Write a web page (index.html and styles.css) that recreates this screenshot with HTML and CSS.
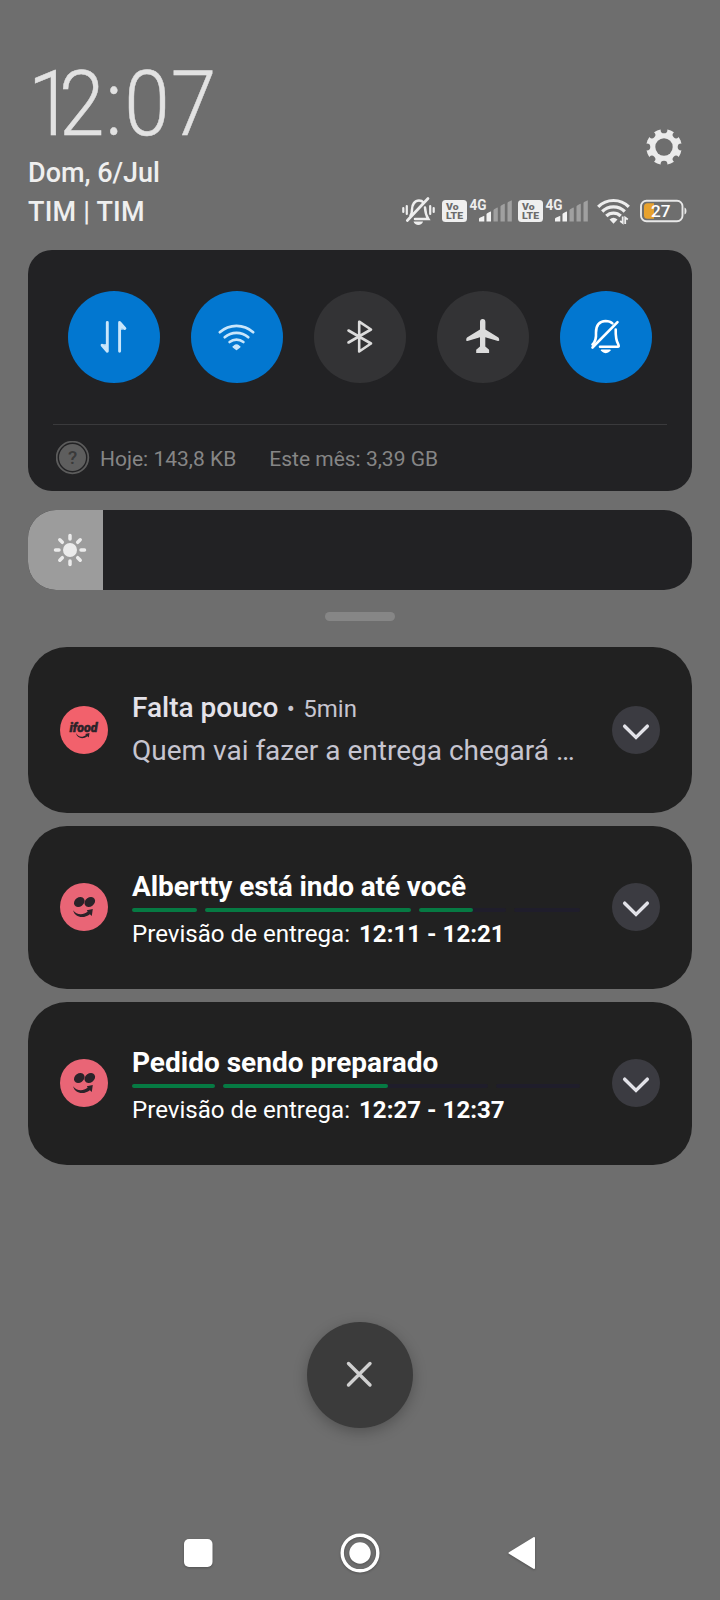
FILE: index.html
```html
<!DOCTYPE html>
<html lang="pt-BR">
<head>
<meta charset="utf-8">
<title>Central de notificações</title>
<link rel="stylesheet" href="styles.css">
</head>
<body>
<svg class="defs" width="0" height="0" aria-hidden="true">
  <defs>
    <symbol id="chevron" viewBox="0 0 48 48">
      <path d="M12.700 20.200 24 31.400l11.300-11.200" fill="none" stroke="#e2e2e8" stroke-width="3.500" stroke-linecap="round" stroke-linejoin="miter"/>
    </symbol>
    <symbol id="face" viewBox="0 0 48 48">
      <g fill="#2b2329">
        <ellipse cx="19.300" cy="19" rx="5.700" ry="4.500" transform="rotate(-35 19.300 19)"/>
        <ellipse cx="29.800" cy="19" rx="5.700" ry="4.500" transform="rotate(-35 29.800 19)"/>
        <path d="M13.200 27.200C16 31.500 22.500 33 27.700 28.600L26.800 27.300 32.800 26 31.800 33 29.900 31.200C23.500 36.200 14.500 34.300 13.200 27.200z"/>
      </g>
    </symbol>
    <symbol id="signal" viewBox="0 0 46 39">
      <text x="0.500" y="16.500" font-size="14" font-weight="700" fill="#eee" textLength="17" lengthAdjust="spacingAndGlyphs">4G</text>
      <path fill="#f2f2f2" d="M10 28.500v-2.500q0-.8.800-1.200l4-1.900q.5-.2.500.4v5.200zM17.500 28.500V21.300q0-.7.700-1.100l3.200-1.600q.6-.2.600.4v9.500z"/>
      <path fill="#a0a0a0" d="M24.500 28.500V17.300q0-.7.700-1.100l3-1.600q.6-.2.600.4v13.500zM31.500 28.500V13.500q0-.7.700-1.100l3-1.600q.6-.2.600.4v17.300zM38.500 28.500V10.100q0-.7.700-1.100l3-1.600q.6-.2.600.4v20.700z"/>
    </symbol>
    <symbol id="volte" viewBox="0 0 25 39">
      <rect x="0" y="7" width="25" height="22" rx="3.500" fill="#efefef"/>
      <text x="4" y="17.200" font-size="9.500" font-weight="900" fill="#6b6b6b" textLength="12.500" lengthAdjust="spacingAndGlyphs">Vo</text>
      <text x="4" y="26.200" font-size="9.500" font-weight="900" fill="#6b6b6b" textLength="17" lengthAdjust="spacingAndGlyphs">LTE</text>
    </symbol>
  </defs>
</svg>
<main class="shade">
  <header class="top">
    <div>
      <div class="clock"><span class="d1">1</span><span class="d2">2</span><span class="colon">:</span><span class="d3">0</span><span>7</span></div>
      <div class="line">Dom, 6/Jul</div>
    </div>
    <svg class="gear" viewBox="0 0 36 36">
      <mask id="cog">
        <circle cx="18" cy="18" r="17.800" fill="#fff"/>
        <circle cx="18" cy="18" r="8.700" fill="#000"/>
        <g fill="#000">
          <circle cx="18" cy="0.900" r="3.400"/>
          <circle cx="18" cy="0.900" r="3.400" transform="rotate(45 18 18)"/>
          <circle cx="18" cy="0.900" r="3.400" transform="rotate(90 18 18)"/>
          <circle cx="18" cy="0.900" r="3.400" transform="rotate(135 18 18)"/>
          <circle cx="18" cy="0.900" r="3.400" transform="rotate(180 18 18)"/>
          <circle cx="18" cy="0.900" r="3.400" transform="rotate(225 18 18)"/>
          <circle cx="18" cy="0.900" r="3.400" transform="rotate(270 18 18)"/>
          <circle cx="18" cy="0.900" r="3.400" transform="rotate(315 18 18)"/>
        </g>
      </mask>
      <rect width="36" height="36" fill="#ebebeb" mask="url(#cog)"/>
    </svg>
  </header>
  <div class="status">
    <div class="line carrier">TIM | TIM</div>
    <div class="icons">
      <svg width="33" height="39" viewBox="0 0 33 39">
        <g fill="none" stroke="#eee" stroke-width="2.200" stroke-linecap="round">
          <path d="M8.500 22.500c1.200-1.500 1.500-3 1.500-6 0-5 2.800-9 7-9 2 0 3.500.8 4.500 2M23 14.500c.3 5 .7 7.500 3.300 11.500H13" stroke-width="2.500"/>
          <path d="M5.300 27.500 26 5.500" stroke-width="2.700"/>
          <path d="M1.300 15v4M4.800 13v8M28.200 13v8M31.700 15v4"/>
        </g>
        <path d="M11.500 28.500h9.500c-.8 4.500-8.500 4.500-9.500 0z" fill="#eee"/>
      </svg>
      <svg class="volte" width="25" height="39"><use href="#volte"/></svg>
      <svg class="signal" width="46" height="39"><use href="#signal"/></svg>
      <svg class="volte2" width="25" height="39"><use href="#volte"/></svg>
      <svg class="signal" width="46" height="39"><use href="#signal"/></svg>
      <svg class="wifi" width="34" height="39" viewBox="0 0 34 39">
        <g fill="none" stroke="#eee" stroke-width="3.200">
          <path d="M1.200 13.900A21.500 21.500 0 0 1 31.800 13.900"/>
          <path d="M5.200 18.500A16 16 0 0 1 27.800 18.500"/>
          <path d="M9.300 23A10.300 10.300 0 0 1 23.700 23"/>
        </g>
        <path d="M12.500 26.500q4-3.600 8 0l-4 4.300z" fill="#eee"/>
        <path d="M25.700 23.500v6.500l-2.500-2M28.200 31v-6.500l2.600 2" fill="none" stroke="#eee" stroke-width="1.800"/>
      </svg>
      <svg class="battery" width="47" height="39" viewBox="0 0 47 39">
        <rect x="1" y="7.800" width="41.500" height="20.400" rx="5.500" fill="none" stroke="#e8e8e8" stroke-width="1.900"/>
        <path d="M7.500 10.300H14v15.400H7.500a3.500 3.500 0 0 1-3.500-3.500v-8.400a3.500 3.500 0 0 1 3.500-3.500z" fill="#e8a22e"/>
        <path d="M44.500 14.500c2.600.8 2.600 6.200 0 7z" fill="#e8e8e8"/>
        <text x="11" y="24" font-size="17" font-weight="500" fill="#fff" textLength="19.500" lengthAdjust="spacingAndGlyphs">27</text>
      </svg>
    </div>
  </div>

  <section class="panel">
    <div class="toggles">
      <div class="toggle on">
        <svg viewBox="0 0 92 92" fill="none" stroke="#c9e6fb" stroke-width="2.900" stroke-linecap="round" stroke-linejoin="round">
          <path d="M39.300 31.500v28.700l-5.200-6M51.600 60.200V31.500l5.300 6"/>
          <path d="M39.300 54v6.200l-5.200-6zM51.600 38v-6.500l5.300 6z" fill="#c9e6fb" stroke-width="1"/>
        </svg>
      </div>
      <div class="toggle on">
        <svg viewBox="0 0 92 92" fill="none" stroke="#c9e6fb" stroke-width="2.700" stroke-linecap="round">
          <path d="M28.800 41.200A25 25 0 0 1 62.200 41.200"/>
          <path d="M33.700 46.200A18 18 0 0 1 57.300 46.200"/>
          <path d="M38.600 51A11.500 11.500 0 0 1 52.400 51"/>
          <path d="M43.200 55q2.300-2 4.600 0l1 .8-3.300 2.600-3.300-2.600z" fill="#c9e6fb" stroke-width="1.500" stroke-linejoin="round"/>
        </svg>
      </div>
      <div class="toggle">
        <svg viewBox="0 0 92 92" fill="none" stroke="#dcdcdc" stroke-width="2.600" stroke-linecap="round" stroke-linejoin="round">
          <path d="M34.500 39.500 57 52.500 45.200 60.500V30.700L57 38.500 34.500 51.500"/>
        </svg>
      </div>
      <div class="toggle">
        <svg viewBox="0 0 92 92" fill="#dcdcdc">
          <path d="M43 31q0-3 2.700-3t2.700 3v7.500l13 8q1 .8.800 3.300l-1.300.3L48.300 46.200V55.500l3.800 3.200v3.300H39.200v-3.300L43 55.500V46.200L30.500 50.100l-1.300-.3q-.2-2.500.8-3.300l13-8z"/>
        </svg>
      </div>
      <div class="toggle on">
        <svg viewBox="0 0 92 92" fill="none" stroke="#fff" stroke-width="2.600" stroke-linecap="round" stroke-linejoin="round">
          <path d="M32.500 53.500q4-3.500 3.500-12 0-11 9.700-11.500 4.300 0 6.700 2.400M55.700 38.500c-.2 7 .3 11 2.700 15.200.6 1.500.4 2-.7 2H40"/>
          <path d="M32.500 56.500 57.500 31.200" />
          <path d="M41.500 59.200h8.500q-4.300 4.400-8.500 0z" fill="#fff" stroke-width="1.500"/>
        </svg>
      </div>
    </div>
    <div class="usage">
      <svg width="34" height="34" viewBox="0 0 34 34">
        <circle cx="16.500" cy="16.500" r="15.800" fill="none" stroke="#5c5c5c" stroke-width="1.800"/>
        <circle cx="16.500" cy="16.500" r="13.500" fill="#5e5e5e"/>
        <text x="16.500" y="23.200" font-size="19" font-weight="500" fill="#3a3a3a" text-anchor="middle">?</text>
      </svg>
      <span class="today">Hoje: 143,8 KB</span>
      <span class="month">Este mês: 3,39 GB</span>
    </div>
  </section>

  <div class="brightness">
    <div class="level">
      <svg width="34" height="34" viewBox="-17 -17 34 34">
        <circle r="7" fill="#ebebeb"/>
        <path d="M0-11V-14.500M0 11V14.500M-11 0H-14.500M11 0H14.500M-7.700-7.700-10.200-10.200M7.700-7.700 10.200-10.200M-7.700 7.700-10.200 10.200M7.700 7.700 10.200 10.200" stroke="#ebebeb" stroke-width="3.500" stroke-linecap="round"/>
      </svg>
    </div>
  </div>
  <div class="handle"></div>

  <section class="cards">
    <article class="card first">
      <svg class="app bright" viewBox="0 0 48 48">
        <text x="9.500" y="25.500" font-size="12.500" font-weight="900" font-style="italic" fill="#2b2329" textLength="28" lengthAdjust="spacingAndGlyphs" stroke="#2b2329" stroke-width=".5">ifood</text>
        <path d="M16 27c2 4 6.500 4.800 10 1.900l-.8-1 4.300-.9-.7 4.400-1.300-1.100c-4.500 3.300-10.700 2.200-11.500-3.300z" fill="#2b2329"/>
      </svg>
      <div class="body">
        <div class="head"><span class="title">Falta pouco</span><span class="dot">•</span><span class="time">5min</span></div>
        <div class="message">Quem vai fazer a entrega chegará …</div>
      </div>
      <svg class="expand"><use href="#chevron"/></svg>
    </article>
    <article class="card">
      <svg class="app"><use href="#face"/></svg>
      <div class="body order">
        <div class="heading tight">Albertty está indo até você</div>
        <div class="steps">
          <i class="step done" style="flex-grow:65"></i>
          <i class="step done" style="flex-grow:206"></i>
          <i class="step" style="flex-grow:87"><b class="fill" style="width:62%"></b></i>
          <i class="step" style="flex-grow:66"></i>
        </div>
        <div class="eta">Previsão de entrega: <b>12:11 - 12:21</b></div>
      </div>
      <svg class="expand"><use href="#chevron"/></svg>
    </article>
    <article class="card">
      <svg class="app"><use href="#face"/></svg>
      <div class="body order">
        <div class="heading">Pedido sendo preparado</div>
        <div class="steps">
          <i class="step done" style="flex-grow:83"></i>
          <i class="step" style="flex-grow:265"><b class="fill" style="width:62.300%"></b></i>
          <i class="step" style="flex-grow:84"></i>
        </div>
        <div class="eta">Previsão de entrega: <b>12:27 - 12:37</b></div>
      </div>
      <svg class="expand"><use href="#chevron"/></svg>
    </article>
  </section>

  <div class="clear">
    <svg width="106" height="106" viewBox="0 0 106 106"><path d="M41.500 41.500 63 63M63 41.500 41.500 63" stroke="#d0d0d0" stroke-width="3.400" stroke-linecap="round"/></svg>
  </div>
  <nav class="nav">
    <svg width="60" height="60" viewBox="0 0 60 60"><rect x="16" y="16" width="28.500" height="28" rx="5" fill="#fff"/></svg>
    <svg width="60" height="60" viewBox="0 0 60 60"><circle cx="30" cy="30" r="17.800" fill="none" stroke="#fff" stroke-width="3.400"/><circle cx="30" cy="30" r="10.700" fill="#fff"/></svg>
    <svg width="60" height="60" viewBox="0 0 60 60"><path d="M17.500 30 42 15v30z" fill="#fff" stroke="#fff" stroke-width="2" stroke-linejoin="round"/></svg>
  </nav>
</main>
</body>
</html>
```
FILE: styles.css
```css
* { box-sizing: border-box; }
body {
  margin: 0;
  background: #6e6e6e;
  font-family: Roboto, "Liberation Sans", sans-serif;
  color: #fff;
}
svg { display: block; flex: none; }
.defs { position: absolute; }
.shade {
  width: 720px;
  height: 1600px;
  padding: 57px 28px 0;
  overflow: hidden;
}
.top {
  display: flex;
  justify-content: space-between;
  align-items: flex-end;
}
.clock {
  height: 97px;
  line-height: 94px;
  font-size: 91px;
  font-weight: 300;
  letter-spacing: -3px;
  color: #e2e2e2;
  white-space: nowrap;
  transform: scaleX(.9);
  transform-origin: 0 0;
  -webkit-text-stroke: .5px #e2e2e2;
}
.d1 { letter-spacing: -16px; }
.d2 { margin-right: 4px; }
.colon { margin-right: 5px; }
.d3 { margin-right: 4px; }
.line {
  height: 39px;
  line-height: 39px;
  font-size: 27px;
  font-weight: 500;
  color: #efefef;
  white-space: nowrap;
}
.carrier { letter-spacing: .2px; }
.gear { width: 36px; height: 36px; margin: 0 10px 28px 0; }
.status {
  display: flex;
  justify-content: space-between;
  height: 39px;
}
.icons { display: flex; margin-right: 5px; }
.volte { margin-left: 7px; }
.signal { margin-left: 2px; }
.volte2 { margin-left: 3px; }
.wifi { margin-left: 6px; }
.battery { margin-left: 9px; }

.panel {
  height: 241px;
  margin-top: 18px;
  padding-top: 41px;
  background: #222224;
  border-radius: 24px;
}
.toggles { display: flex; gap: 31px; padding: 0 40px; }
.toggle {
  width: 92px;
  height: 92px;
  border-radius: 50%;
  background: #333335;
}
.toggle.on { background: #0277d0; }
.usage {
  display: flex;
  align-items: center;
  height: 67px;
  margin: 41px 25px 0;
  padding-left: 3px;
  border-top: 1px solid #3a3a3c;
  font-size: 21px;
  color: #868686;
}
.today { margin: 0 33px 0 10px; }
.today, .month { padding-top: 2px; }

.brightness {
  height: 80px;
  margin-top: 19px;
  border-radius: 28px;
  background: #222224;
  overflow: hidden;
}
.level {
  display: flex;
  align-items: center;
  width: 75px;
  height: 80px;
  padding-left: 25px;
  background: #9c9c9c;
}
.handle {
  width: 70px;
  height: 9px;
  margin: 22px auto 0;
  border-radius: 5px;
  background: #868686;
}

.cards { display: flex; flex-direction: column; gap: 13px; margin-top: 26px; }
.card {
  display: flex;
  align-items: center;
  height: 163px;
  padding: 0 32px 1px;
  border-radius: 39px;
  background: #212121;
}
.card.first { height: 166px; padding-bottom: 0; }
.app {
  width: 48px;
  height: 48px;
  border-radius: 50%;
  background: #e96576;
}
.app.bright { background: #f2616c; }
.body { width: 448px; margin: 0 32px 0 24px; }
.first .body { padding-bottom: 2px; }
.expand {
  width: 48px;
  height: 48px;
  border-radius: 50%;
  background: #3b3b41;
}
.head { display: flex; align-items: baseline; height: 43px; line-height: 43px; }
.title { font-size: 28px; font-weight: 500; color: #e4e2e9; }
.dot { width: 25px; text-align: center; font-size: 24px; color: #c6c5d0; }
.time { font-size: 24px; color: #c6c5d0; }
.message {
  line-height: 43px;
  font-size: 28px;
  color: #c6c5d0;
  white-space: nowrap;
}
.order { padding-top: 5px; white-space: nowrap; }
.heading { line-height: 36px; font-size: 28px; font-weight: 700; }
.heading.tight { letter-spacing: -.1px; }
.steps { display: flex; gap: 8px; margin: 3px 0 6px; }
.step {
  flex: 1 1 0;
  height: 4px;
  border-radius: 2px;
  background: #1f1d2b;
}
.step.done, .fill { background: #067a43; }
.fill { display: block; height: 4px; border-radius: 2px; }
.eta { line-height: 32px; font-size: 24.100px; }
.eta b { margin-left: 3px; }

.clear {
  width: 106px;
  height: 106px;
  margin: 157px auto 0;
  border-radius: 50%;
  background: #3b3b3b;
  box-shadow: 0 4px 14px rgba(0, 0, 0, .25);
}
.nav {
  display: flex;
  justify-content: center;
  gap: 102px;
  margin-top: 95px;
}
.nav svg { filter: drop-shadow(0 1px 1px rgba(0, 0, 0, .25)); }
```
